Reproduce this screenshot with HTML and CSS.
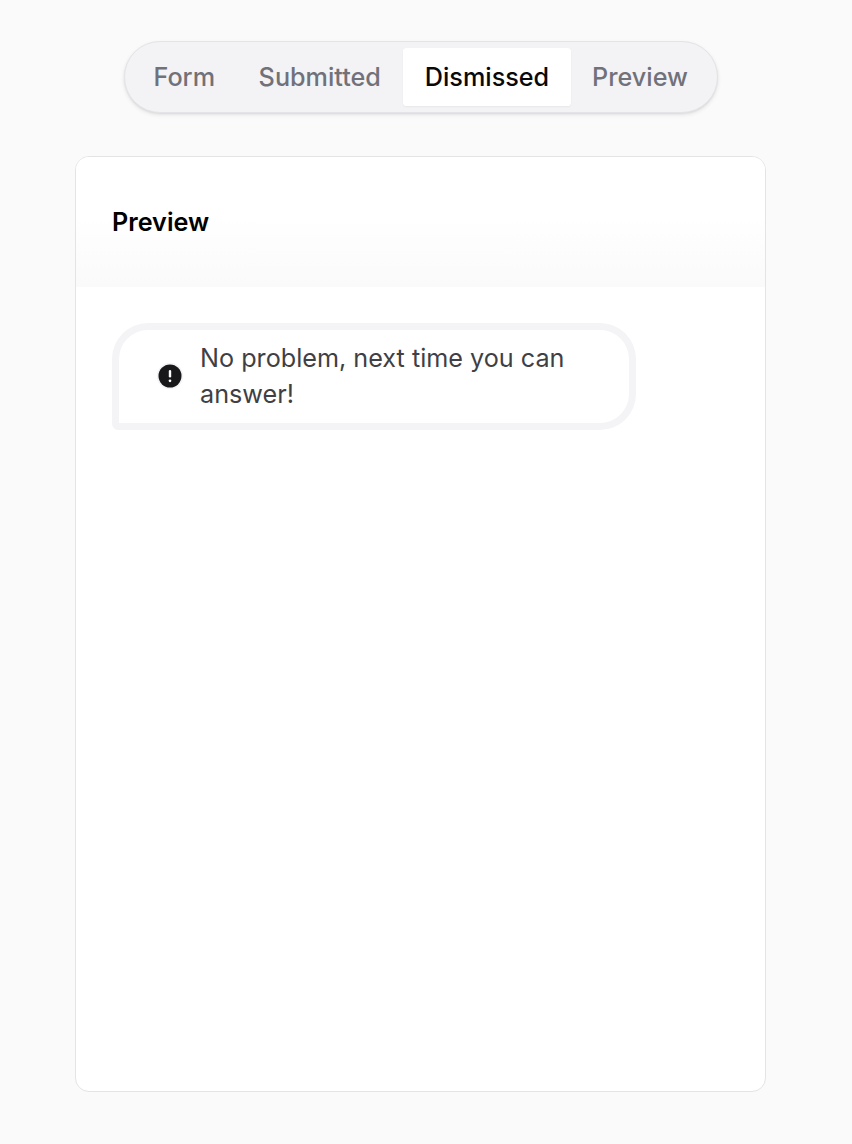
FILE: index.html
```
<!DOCTYPE html>
<html lang="en">
<head>
<meta charset="utf-8">
<title>Preview</title>
<link rel="stylesheet" href="styles.css">
</head>
<body>
<main class="page">
  <nav class="tabs">
    <button class="tab tab-form">Form</button>
    <button class="tab tab-submitted">Submitted</button>
    <button class="tab tab-dismissed active">Dismissed</button>
    <button class="tab tab-preview">Preview</button>
  </nav>
  <section class="card">
    <header class="card-header"><h1 class="title">Preview</h1></header>
    <div class="card-body">
      <div class="bubble">
        <svg class="icon" viewBox="0 0 28 28" aria-hidden="true">
          <circle cx="14" cy="14" r="13.2" fill="#f4f4f6"/>
          <circle cx="14" cy="14" r="11.5" fill="#18181b"/>
          <path d="M14 9.1v5.1" stroke="#fff" stroke-width="2.4" stroke-linecap="round"/>
          <circle cx="14" cy="18.8" r="1.35" fill="#fff"/>
        </svg>
        <p class="message">No problem, next time you can answer!</p>
      </div>
    </div>
  </section>
</main>
</body>
</html>
```
FILE: styles.css
```
* { box-sizing: border-box; }
body {
  margin: 0;
  background: #fafafa;
  font-family: Inter, "Liberation Sans", sans-serif;
  font-size: 25.2px;
  color: #09090b;
}
.page {
  height: 1144px;
  padding: 41px 86px 52px 75px;
  display: flex;
  flex-direction: column;
  align-items: center;
  gap: 43px;
}
.tabs {
  display: flex;
  align-items: center;
  width: 594px;
  height: 72px;
  margin-left: 1px;
  padding: 0 6px 0 7px;
  border: 1px solid #e4e4e8;
  border-radius: 36px;
  background: #f3f3f6;
  box-shadow: 0 2px 4px rgba(0, 0, 0, .09), 0 1px 2px rgba(0, 0, 0, .06);
}
.tab {
  flex: none;
  height: 58px;
  padding: 0;
  border: 0;
  border-radius: 3.6px;
  background: transparent;
  font: 500 25.2px/36px Inter, "Liberation Sans", sans-serif;
  color: #71717a;
}
.tab-form { width: 104.5px; }
.tab-submitted { width: 166.5px; }
.tab-dismissed { width: 168px; }
.tab-preview { width: 138px; }
.active {
  background: #fff;
  color: #09090b;
  box-shadow: 0 1px 2px rgba(0, 0, 0, .05);
}
.card {
  width: 691px;
  height: 936px;
  border: 1px solid #e4e4e7;
  border-radius: 14px;
  background: #fff;
  overflow: hidden;
}
.card-header {
  height: 130px;
  padding: 0 36px;
  display: flex;
  align-items: center;
  background: linear-gradient(to bottom, #fff 45%, #fafafa);
}
.title {
  margin: 0;
  font-size: 25.2px;
  line-height: 36px;
  font-weight: 600;
  color: #000;
}
.card-body { padding: 36px; }
.bubble {
  width: 524px;
  height: 107px;
  padding: 0 39px 1px 37px;
  display: flex;
  align-items: center;
  gap: 16px;
  border: 7px solid #f4f4f6;
  border-radius: 36px 36px 36px 6px;
}
.icon { flex: none; width: 28px; height: 28px; }
.message {
  margin: 0;
  line-height: 36px;
  color: #3f3f46;
}
```
